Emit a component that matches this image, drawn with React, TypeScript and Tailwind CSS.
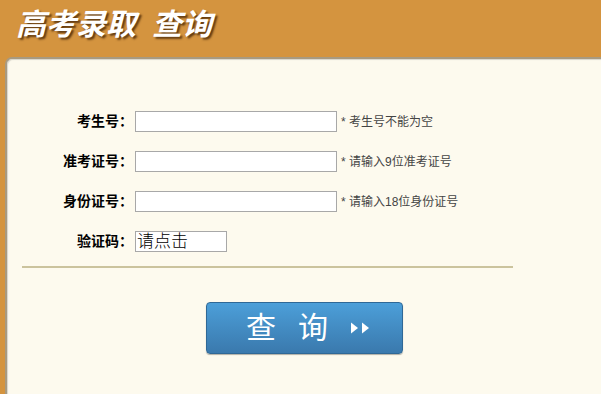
import React from "react";

const rows = [
  { label: "考生号：", hint: "* 考生号不能为空" },
  { label: "准考证号：", hint: "* 请输入9位准考证号" },
  { label: "身份证号：", hint: "* 请输入18位身份证号" },
];

const App: React.FC = () => {
  return (
    <div
      className="w-[601px] h-[394px] overflow-hidden bg-[#d4943f] flex flex-col"
      style={{ fontFamily: '"Liberation Sans", "Noto Sans CJK SC", sans-serif' }}
    >
      <div className="h-[57px] shrink-0 pl-[16px] pt-[5px]">
        <h1 className="flex gap-[16px] text-[30px] leading-[40px] font-bold italic text-white [text-shadow:2px_2px_2px_rgba(60,30,0,0.75)]">
          <span>高考录取</span>
          <span>查询</span>
        </h1>
      </div>
      <div className="flex-1 ml-[5px] bg-[#fdfaee] rounded-tl-[7px] border-t-2 border-l-2 border-[#a89a80] shadow-[inset_1px_1px_1px_rgba(0,0,0,0.15)]">
        <div className="pt-[52px] flex flex-col gap-[19px]">
          {rows.map((r) => (
            <div key={r.label} className="flex items-center h-[21px]">
              <div className="w-[126px] text-right text-[14px] font-bold text-black">
                {r.label}
              </div>
              <input
                className="ml-[2px] w-[202px] h-[21px] bg-white border border-[#a8a8a8] outline-none"
                readOnly
              />
              <span className="ml-[4px] text-[12px] text-[#444]">{r.hint}</span>
            </div>
          ))}
          <div className="flex items-center h-[21px]">
            <div className="w-[126px] text-right text-[14px] font-bold text-black">
              验证码：
            </div>
            <div className="ml-[2px] w-[92px] h-[21px] bg-white border border-[#a8a8a8] flex items-center pl-[1px] text-[17px] leading-none font-light text-black">
              请点击
            </div>
          </div>
        </div>
        <div className="ml-[15px] w-[491px] mt-[14px] border-t-2 border-[#cbc39d]" />
        <div className="flex justify-center mt-[34px]">
          <button className="w-[197px] h-[52px] rounded-[4px] border border-[#2f6896] bg-gradient-to-b from-[#4c9fd9] to-[#3a79ad] shadow-[0_1px_1px_rgba(0,0,0,0.3)] flex items-center justify-center text-white">
            <span className="text-[30px] leading-none tracking-[22px] ml-[10px]">查询</span>
            <svg width="22" height="14" viewBox="0 0 22 14">
              <path d="M1 1.5 L8 7 L1 12.5 Z" fill="white" />
              <path d="M12 1.5 L19 7 L12 12.5 Z" fill="white" />
            </svg>
          </button>
        </div>
      </div>
    </div>
  );
};

export default App;
